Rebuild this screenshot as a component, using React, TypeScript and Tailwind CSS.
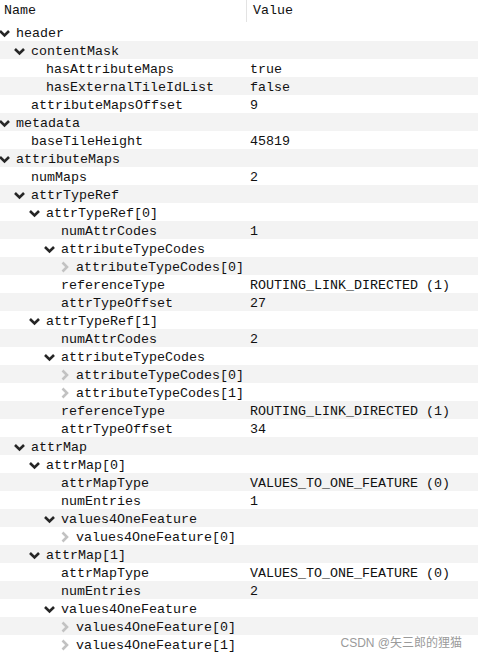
import React from 'react';

type Kind = 'open' | 'closed' | 'leaf';
type Row = [string, number, Kind, string?];

const rows: Row[] = [
  ['header', 0, 'open'],
  ['contentMask', 1, 'open'],
  ['hasAttributeMaps', 2, 'leaf', 'true'],
  ['hasExternalTileIdList', 2, 'leaf', 'false'],
  ['attributeMapsOffset', 1, 'leaf', '9'],
  ['metadata', 0, 'open'],
  ['baseTileHeight', 1, 'leaf', '45819'],
  ['attributeMaps', 0, 'open'],
  ['numMaps', 1, 'leaf', '2'],
  ['attrTypeRef', 1, 'open'],
  ['attrTypeRef[0]', 2, 'open'],
  ['numAttrCodes', 3, 'leaf', '1'],
  ['attributeTypeCodes', 3, 'open'],
  ['attributeTypeCodes[0]', 4, 'closed'],
  ['referenceType', 3, 'leaf', 'ROUTING_LINK_DIRECTED (1)'],
  ['attrTypeOffset', 3, 'leaf', '27'],
  ['attrTypeRef[1]', 2, 'open'],
  ['numAttrCodes', 3, 'leaf', '2'],
  ['attributeTypeCodes', 3, 'open'],
  ['attributeTypeCodes[0]', 4, 'closed'],
  ['attributeTypeCodes[1]', 4, 'closed'],
  ['referenceType', 3, 'leaf', 'ROUTING_LINK_DIRECTED (1)'],
  ['attrTypeOffset', 3, 'leaf', '34'],
  ['attrMap', 1, 'open'],
  ['attrMap[0]', 2, 'open'],
  ['attrMapType', 3, 'leaf', 'VALUES_TO_ONE_FEATURE (0)'],
  ['numEntries', 3, 'leaf', '1'],
  ['values4OneFeature', 3, 'open'],
  ['values4OneFeature[0]', 4, 'closed'],
  ['attrMap[1]', 2, 'open'],
  ['attrMapType', 3, 'leaf', 'VALUES_TO_ONE_FEATURE (0)'],
  ['numEntries', 3, 'leaf', '2'],
  ['values4OneFeature', 3, 'open'],
  ['values4OneFeature[0]', 4, 'closed'],
  ['values4OneFeature[1]', 4, 'closed'],
];

// indentation per tree level (15px each)
const indent = ['pl-0', 'pl-[15px]', 'pl-[30px]', 'pl-[45px]', 'pl-[60px]'];

function Chevron({ kind }: { kind: Kind }) {
  if (kind === 'open') {
    return (
      <svg width="11" height="9" viewBox="0 0 11 9" className="-ml-[1px] translate-y-[1px]">
        <path d="M1 2 L5.5 6.5 L10 2" fill="none" stroke="#262626" strokeWidth="2.6" />
      </svg>
    );
  }
  if (kind === 'closed') {
    return (
      <svg width="8" height="12" viewBox="0 0 8 12" className="ml-[1px] translate-y-[1px]">
        <path d="M1.5 1.5 L6 6 L1.5 10.5" fill="none" stroke="#c2c2c2" strokeWidth="2.6" />
      </svg>
    );
  }
  return null;
}

export default function App() {
  return (
    <div
      className="relative w-[478px] h-[658px] overflow-hidden bg-white text-[13.33px] text-[#111]"
      style={{ fontFamily: '"Liberation Mono", "DejaVu Sans Mono", monospace' }}
    >
      {/* Column header */}
      <div className="flex h-[23px] items-start">
        <div className="w-[246px] pl-[4px] pt-[2px] leading-[18px]">Name</div>
        <div className="w-px h-[22px] bg-[#e3e3e3]" />
        <div className="pl-[6px] pt-[2px] leading-[18px]">Value</div>
      </div>

      {/* Tree rows */}
      {rows.map(([name, level, kind, value], i) => (
        <div
          key={i}
          className={`flex h-[18px] items-center leading-[18px] ${i % 2 === 1 ? 'bg-[#f3f3f3]' : 'bg-white'}`}
        >
          <div className={`flex w-[246px] items-center whitespace-nowrap ${indent[level]}`}>
            <span className="flex w-[16px] shrink-0 items-center">
              <Chevron kind={kind} />
            </span>
            <span className="translate-y-[2px]">{name}</span>
          </div>
          <div className="pl-[4px] whitespace-nowrap translate-y-[2px]">{value ?? ''}</div>
        </div>
      ))}

      {/* watermark */}
      <div
        className="absolute right-[16px] bottom-[8px] text-[12px] leading-[14px] text-[#9a9a9a]"
        style={{ fontFamily: '"Liberation Sans", "Noto Sans CJK SC", sans-serif' }}
      >
        CSDN @矢三郎的狸猫
      </div>
    </div>
  );
}
